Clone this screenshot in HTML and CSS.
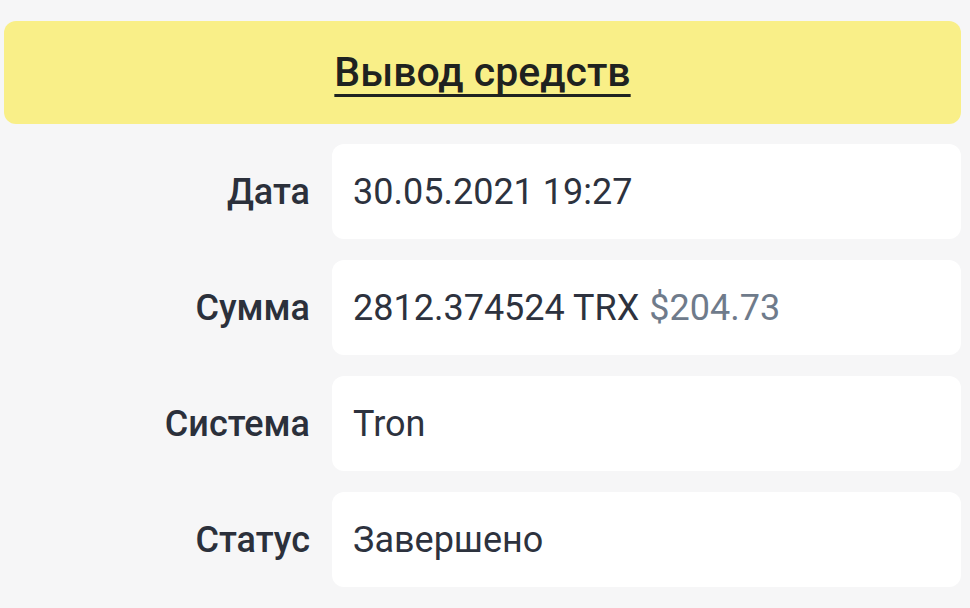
FILE: index.html
```html
<!DOCTYPE html>
<html lang="ru">

<head>
    <meta charset="UTF-8">
    <meta name="viewport" content="width=device-width, initial-scale=1.0">
    <title>Вывод средств</title>
    <link rel="stylesheet" href="styles.css">
</head>

<body>
    <div class="page">
        <div class="header">
            <a href="#" class="header-title">Вывод средств</a>
        </div>

        <div class="details">
            <div class="label">Дата</div>
            <div class="value">30.05.2021 19:27</div>

            <div class="label">Сумма</div>
            <div class="value">2812.374524 TRX <span class="muted">$204.73</span></div>

            <div class="label">Система</div>
            <div class="value">Tron</div>

            <div class="label">Статус</div>
            <div class="value">Завершено</div>
        </div>
    </div>
</body>

</html>
```

FILE: styles.css
```css
body {
    font-family: Roboto, "Noto Sans", sans-serif;
    background-color: #f6f6f7;
    margin: 0;
}

.page {
    padding: 21px 9px 0 4px;
}

.header {
    background-color: #f9ef88;
    border-radius: 12px;
    height: 103px;
    display: flex;
    align-items: center;
    justify-content: center;
}

.header-title {
    color: #1f2220;
    font-size: 41px;
    font-weight: 500;
    text-decoration: underline;
    text-decoration-thickness: 3px;
    text-decoration-skip-ink: none;
    text-underline-offset: 8px;
    margin-top: -2px;
}

.details {
    display: grid;
    grid-template-columns: 306px 1fr;
    column-gap: 22px;
    row-gap: 21px;
    margin-top: 20px;
}

.label {
    display: flex;
    align-items: center;
    justify-content: flex-end;
    color: #2b303b;
    font-size: 36px;
    font-weight: 500;
}

.value {
    background-color: #ffffff;
    border-radius: 12px;
    height: 95px;
    display: flex;
    align-items: center;
    gap: 10px;
    padding-left: 21px;
    color: #2d323e;
    font-size: 36px;
}

.muted {
    color: #6f7b8b;
}
```
